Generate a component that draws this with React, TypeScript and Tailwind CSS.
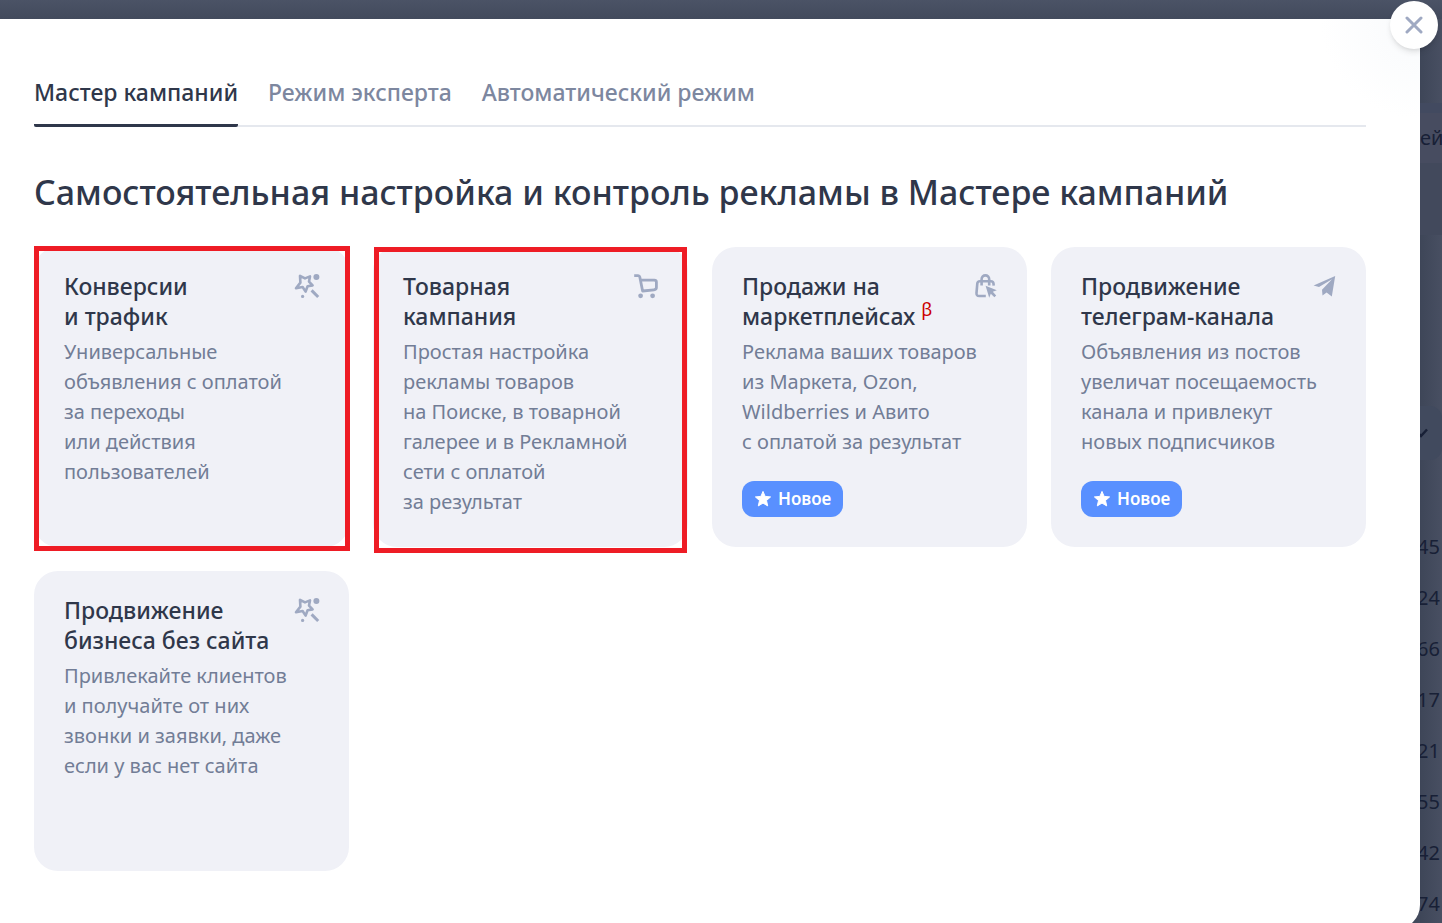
import { useState } from 'react';
import type { ReactNode } from 'react';

interface Campaign {
  id: string;
  title: string;
  text: string;
  icon: ReactNode;
  beta?: boolean;
  isNew?: boolean;
  frame?: string;
}

function WandIcon() {
  return (
    <svg viewBox="0 0 26 26" className="size-[26px]" fill="none" stroke="currentColor" aria-hidden="true">
      <path
        d="M6 2.8 11 5.4 16 3.400 15 8.600 18.600 12.400 13.600 13.200 11.600 18.600 8.600 14 2 15.200 6.400 9.600Z"
        strokeWidth="2.6"
        strokeLinejoin="round"
      />
      <path d="m17.600 17.400 6.600 6.600" strokeWidth="3" strokeLinecap="butt" />
      <circle cx="22.4" cy="4" r="3" fill="currentColor" stroke="none" />
      <circle cx="8.6" cy="23.4" r="1.6" fill="currentColor" stroke="none" />
    </svg>
  );
}

function CartIcon() {
  return (
    <svg viewBox="0 0 26 26" className="size-[26px]" fill="none" stroke="currentColor" aria-hidden="true">
      <path
        d="M1.2 2.6h4q1.3 0 1.6 1.4l2.8 14 11.400-1.200q2.400-.2 2.400-2.200V9q0-1.800-2-1.800H8"
        strokeWidth="2.8"
        strokeLinejoin="round"
      />
      <circle cx="7.6" cy="22.8" r="2.4" fill="currentColor" stroke="none" />
      <circle cx="19.6" cy="22.8" r="2.4" fill="currentColor" stroke="none" />
    </svg>
  );
}

function BagIcon() {
  return (
    <svg viewBox="0 0 26 26" className="size-[26px]" fill="none" stroke="currentColor" aria-hidden="true">
      <path
        d="M13.8 23H7.2q-3 0-2.7-3L5.3 10.600q.2-2.400 2.600-2.400h11q2.400 0 2.600 2.400l.2 2"
        strokeWidth="2.600"
      />
      <path d="M9.600 12.500V6.200a3.800 3.800 0 0 1 7.600 0v6.300" strokeWidth="2.600" />
      <path d="m13.600 12.800 11.200 4.400-4 1.600 3.400 3.600-1.800 1.800-3.600-3.500-1.600 4Z" fill="currentColor" stroke="none" />
    </svg>
  );
}

function PlaneIcon() {
  return (
    <svg viewBox="0 0 26 26" className="size-[26px]" fill="currentColor" aria-hidden="true">
      <path d="M24.200 3 20.800 23.400 15.600 19.600 11.500 22.600 11 16.800 21 6.200 8 14 2.600 12.400Z" />
    </svg>
  );
}

function StarIcon() {
  return (
    <svg viewBox="0 0 18 18" className="size-[18px]" fill="currentColor" aria-hidden="true">
      <path
        d="m9 1.400 2.100 5 5.500.5-4.100 3.600 1.200 5.400L9 13.100l-4.700 2.800 1.200-5.400L1.400 6.900l5.500-.5Z"
        stroke="currentColor"
        strokeLinejoin="round"
      />
    </svg>
  );
}

const tabs = ['Мастер кампаний', 'Режим эксперта', 'Автоматический режим'];

const campaigns: Campaign[] = [
  {
    id: 'conversions',
    title: 'Конверсии\nи трафик',
    text: 'Универсальные\nобъявления с оплатой\nза переходы\nили действия\nпользователей',
    icon: <WandIcon />,
    frame: '-top-px left-0 -right-px -bottom-1',
  },
  {
    id: 'goods',
    title: 'Товарная\nкампания',
    text: 'Простая настройка\nрекламы товаров\nна Поиске, в товарной\nгалерее и в Рекламной\nсети с оплатой\nза результат',
    icon: <CartIcon />,
    frame: 'top-0 left-px right-px -bottom-1.5',
  },
  {
    id: 'marketplaces',
    title: 'Продажи на\nмаркетплейсах',
    text: 'Реклама ваших товаров\nиз Маркета, Ozon,\nWildberries и Авито\nс оплатой за результат',
    icon: <BagIcon />,
    beta: true,
    isNew: true,
  },
  {
    id: 'telegram',
    title: 'Продвижение\nтелеграм-канала',
    text: 'Объявления из постов\nувеличат посещаемость\nканала и привлекут\nновых подписчиков',
    icon: <PlaneIcon />,
    isNew: true,
  },
  {
    id: 'no-site',
    title: 'Продвижение\nбизнеса без сайта',
    text: 'Привлекайте клиентов\nи получайте от них\nзвонки и заявки, даже\nесли у вас нет сайта',
    icon: <WandIcon />,
  },
];

const stats = ['45', '24', '66', '17', '21', '55', '42', '74'];

function CampaignCard({ campaign }: { campaign: Campaign }) {
  return (
    <button
      type="button"
      className="relative flex min-h-[300px] cursor-pointer flex-col items-start rounded-3xl bg-[#f0f1f7] px-[30px] pt-6 pb-[30px] text-left"
    >
      <span className="flex w-full items-start justify-between">
        <span className="text-[23px]/[30px] font-medium whitespace-pre text-[#2f374a]">
          {campaign.title}
          {campaign.beta && <sup className="ml-1.5 text-lg leading-none font-normal text-[#cc0000]">β</sup>}
        </span>
        <span className="-mr-px -ml-6 pt-0.5 text-[#9fa9c2]">{campaign.icon}</span>
      </span>
      <span className="mt-1.5 text-xl/[30px] whitespace-pre text-[#727d96]">{campaign.text}</span>
      {campaign.isNew && (
        <span className="mt-auto flex h-9 items-center gap-1.5 rounded-xl bg-[#5990ff] px-3 text-[17px] font-semibold text-white">
          <StarIcon />
          Новое
        </span>
      )}
      {campaign.frame && <span className={`absolute border-5 border-[#ee1c25] ${campaign.frame}`} />}
    </button>
  );
}

function PageBehind() {
  return (
    <aside className="flex w-[22px] shrink-0 flex-col items-end overflow-hidden bg-linear-to-r from-[#3e4658] to-[#484f62] pt-[84px] text-xl text-[#182036]">
      <div className="flex h-[60px] w-full items-center border-t-10 border-[#424a60] bg-[#474c60]">ей</div>
      <div className="h-[72px] w-full bg-[#42495c]" />
      <div className="mt-[171px] flex h-[54px] w-10 items-center rounded-r-xl bg-[#414a5e] pl-[18px]">
        <svg viewBox="0 0 12 12" className="size-3 overflow-visible" fill="none" stroke="currentColor" strokeWidth="2.500" aria-hidden="true">
          <path d="m-4 4 5 5 6-6.500" />
        </svg>
      </div>
      <ul className="mt-[61px] pr-0.5">
        {stats.map(value => (
          <li key={value} className="flex h-[51px] items-center justify-end">{value}</li>
        ))}
      </ul>
    </aside>
  );
}

export default function App() {
  const [activeTab, setActiveTab] = useState(tabs[0]);

  return (
    <div className="relative h-screen overflow-hidden bg-[#464e61] font-['Noto_Sans','Open_Sans',sans-serif]">
      <div className="h-[19px] bg-linear-to-b from-[#4b5366] to-[#424a5c]" />
      <div className="flex bg-[#464e61]">
        <main className="flex-1 rounded-br-3xl bg-white bg-[radial-gradient(circle_at_top_right,#f8fafc,#ffffff_100px)] pt-11 pr-[54px] pb-[54px] pl-[34px] shadow-lg">
          <div role="tablist" className="flex gap-[30px] border-b-2 border-[#e5e8ee]">
            {tabs.map(tab => (
              <button
                key={tab}
                type="button"
                role="tab"
                aria-selected={tab === activeTab}
                onClick={() => setActiveTab(tab)}
                className={`-mb-0.5 h-16 cursor-pointer border-b-3 pb-0.5 text-[23px] font-medium ${
                  tab === activeTab
                    ? 'rounded-xs border-[#2f374a] text-[#2f374a]'
                    : 'border-transparent text-[#7d879f]'
                }`}
              >
                {tab}
              </button>
            ))}
          </div>
          <h1 className="mt-10 text-[34px]/[50px] font-medium text-[#2f374a]">
            Самостоятельная настройка и контроль рекламы в Мастере кампаний
          </h1>
          <div className="mt-[30px] grid grid-cols-4 gap-6">
            {campaigns.map(campaign => (
              <CampaignCard key={campaign.id} campaign={campaign} />
            ))}
          </div>
        </main>
        <PageBehind />
      </div>
      <button
        type="button"
        aria-label="Закрыть"
        className="absolute top-px right-1 flex size-12 cursor-pointer items-center justify-center rounded-full bg-white text-[#9fa9c2] shadow-md"
      >
        <svg viewBox="0 0 18 18" className="size-[18px]" fill="none" stroke="currentColor" strokeWidth="3" strokeLinecap="round" aria-hidden="true">
          <path d="m2 2 14 14M16 2 2 16" />
        </svg>
      </button>
    </div>
  );
}
